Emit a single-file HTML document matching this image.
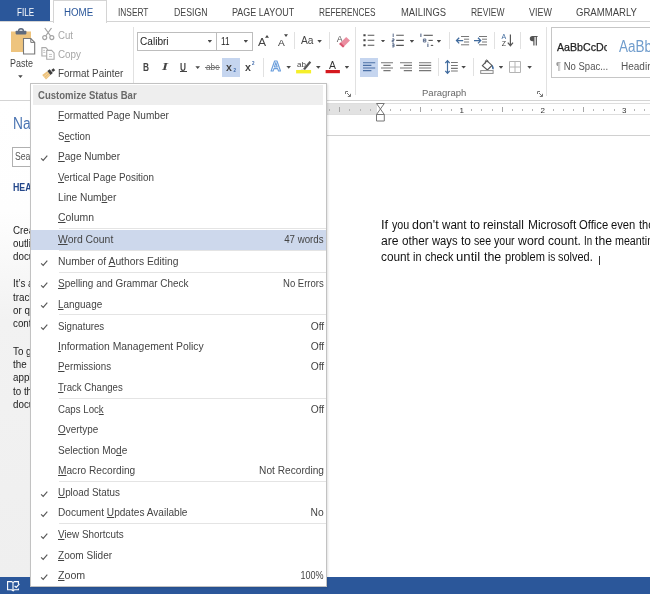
<!DOCTYPE html>
<html>
<head>
<meta charset="utf-8">
<title>Word - Customize Status Bar</title>
<style>
*{box-sizing:border-box;margin:0;padding:0}
html,body{width:650px;height:594px;overflow:hidden;background:#fff;font-family:"Liberation Sans",sans-serif;}
body{position:relative;color:#444;will-change:transform}
.abs{position:absolute}
svg{position:absolute;overflow:visible}
/* tabs */
#file{left:0;top:0;width:50px;height:21.5px;background:#2b579a}
.tab{top:6px;line-height:14px;font-size:10px;color:#444;white-space:nowrap;transform-origin:0 50%}
#home{left:53px;top:0;width:53.5px;height:22.5px;border:1px solid #d4d4d4;border-bottom:none;background:#fff;z-index:3}
#ribbon{left:0;top:21px;width:650px;height:80px;background:#fff;border-top:1px solid #d4d4d4;border-bottom:1px solid #d4d4d4}
.vsep{position:absolute;width:1px;background:#e1e1e1}
.t{position:absolute;white-space:nowrap;font-size:10px;color:#444;line-height:14px;transform-origin:0 50%}
.g{color:#a6a6a6}
.d{font-size:12px;line-height:15.65px;color:#111;white-space:pre}
.arr{position:absolute;width:4.6px;height:2.7px;background:#4a4a4a;clip-path:polygon(0 0,100% 0,50% 100%)}
/* nav pane */
#nav{left:0;top:101px;width:326px;height:476px;background:linear-gradient(to bottom,#ffffff 0,#fefefe 110px,#f2f2f2 220px,#efefef 100%)}
/* doc area */
#docbg{left:326px;top:101px;width:324px;height:476px;background:#fff}
/* status bar */
#status{left:0;top:577px;width:650px;height:17px;background:#2b579a}
/* menu */
#menu{left:30px;top:83px;width:296.5px;height:504px;background:#fff;border:1px solid #c2c2c2;z-index:10;box-shadow:1px 1px 2px rgba(0,0,0,.12)}
#mhead{left:2.1px;top:1.1px;width:290.4px;height:19.5px;background:#eeeeee}
#mhead span{position:absolute;left:5.3px;top:3.8px;font-weight:bold;font-size:10px;color:#696969;line-height:14px;white-space:nowrap;transform-origin:0 50%;display:block}
.mi{position:absolute;left:0;width:294.5px;height:20.33px;font-size:10px;line-height:20.33px;color:#444}
.mi .l{position:absolute;left:27.4px;top:0;white-space:nowrap;transform-origin:0 50%}
.mi .r{position:absolute;right:1.6px;top:0;white-space:nowrap;transform-origin:100% 50%}
.mi .c{position:absolute;left:8.9px;top:6.9px;width:8px;height:8px}
.mi u{text-decoration:underline;text-underline-offset:1px}
.msep{position:absolute;left:28px;width:266.5px;height:1px;background:#e4e4e4}
.hl{background:#cdd8ec}
</style>
</head>
<body>
<div id="file" class="abs"></div>
<div class="abs tab" style="transform:scaleX(0.8047);left:16.6px;color:#fff;z-index:4">FILE</div>
<div id="home" class="abs"></div>
<div class="abs tab" style="transform:scaleX(0.9733);left:64.4px;color:#2b579a;z-index:4">HOME</div>
<div class="abs tab" style="transform:scaleX(0.8329);left:118.4px">INSERT</div>
<div class="abs tab" style="transform:scaleX(0.8763);left:173.7px">DESIGN</div>
<div class="abs tab" style="transform:scaleX(0.9002);left:232.4px">PAGE LAYOUT</div>
<div class="abs tab" style="transform:scaleX(0.8251);left:319.3px">REFERENCES</div>
<div class="abs tab" style="transform:scaleX(0.9415);left:400.8px">MAILINGS</div>
<div class="abs tab" style="transform:scaleX(0.8466);left:471px">REVIEW</div>
<div class="abs tab" style="transform:scaleX(0.8919);left:529.3px">VIEW</div>
<div class="abs tab" style="transform:scaleX(0.9573);left:576.4px">GRAMMARLY</div>
<div id="ribbon" class="abs"></div>

<!-- CLIPBOARD GROUP -->
<svg style="left:10px;top:28px" width="27" height="28" viewBox="0 0 27 28">
  <rect x="1" y="3.5" width="20" height="20.5" fill="#eec47e"/>
  <rect x="5.6" y="2.8" width="10.8" height="3.6" rx="0.8" fill="#5f6b7e"/>
  <path d="M8.6 3 Q8.6 0.8 11 0.8 Q13.4 0.8 13.4 3" fill="none" stroke="#5f6b7e" stroke-width="1.4"/>
  <path d="M13.5 10.5 H20.8 L24.7 14.4 V26 H13.5 Z" fill="#fff" stroke="#777" stroke-width="1.1"/>
  <path d="M20.8 10.5 V14.4 H24.7" fill="none" stroke="#777" stroke-width="1"/>
</svg>
<div class="t" style="transform:scaleX(0.8953);left:10.1px;top:57.2px">Paste</div>
<div class="arr" style="left:18.1px;top:75.3px"></div>

<svg style="left:42px;top:28px" width="13" height="12" viewBox="0 0 13 12">
  <path d="M2.8 0 L8.6 8 M9.5 0 L3.7 8" stroke="#a3a3a3" stroke-width="1.25" fill="none"/>
  <circle cx="2.7" cy="9.6" r="2" fill="none" stroke="#a3a3a3" stroke-width="1.2"/>
  <circle cx="9.8" cy="9.6" r="2" fill="none" stroke="#a3a3a3" stroke-width="1.2"/>
</svg>
<div class="t g" style="transform:scaleX(0.9639);left:58px;top:28.9px">Cut</div>
<svg style="left:41px;top:47.2px" width="14" height="13" viewBox="0 0 14 13">
  <path d="M0.9 0.6 H4.8 L6.6 2.4 V9 H0.9 Z" fill="#fff" stroke="#ababab" stroke-width="1.1"/>
  <path d="M5.7 3.4 H10.6 L13.1 5.9 V12.2 H5.7 Z" fill="#fff" stroke="#ababab" stroke-width="1.1"/>
  <path d="M2.2 3.4H4 M2.2 5.4H4.4 M8 7.4H11 M8 9.6H11" stroke="#c4c4c4" stroke-width="1"/>
</svg>
<div class="t g" style="transform:scaleX(0.9846);left:58px;top:48.1px">Copy</div>
<svg style="left:42px;top:67.6px" width="14" height="12" viewBox="0 0 14 12">
  <path d="M0.2 7 L5.2 3.2 L8.4 7.2 L4 11.6 Z" fill="#edc27b"/>
  <path d="M2 8.6 L5.8 5.2 M3.4 10.2 L7.2 6.6" stroke="#f6dcae" stroke-width="0.8"/>
  <path d="M5.3 3.1 L7.7 1.3 L10.8 5.1 L8.5 7.1 Z" fill="#3d3d3d"/>
  <path d="M9.3 2 L11.5 0.2 L13.2 2.2 L10.9 4 Z" fill="#3d3d3d"/>
</svg>
<div class="t" style="transform:scaleX(0.9888);left:58px;top:67.1px">Format Painter</div>
<div class="vsep" style="left:133px;top:27px;height:68px"></div>

<!-- FONT GROUP -->
<div class="abs" style="left:137px;top:32px;width:80px;height:18.6px;border:1px solid #bdbdbd;background:#fff"></div>
<div class="abs" style="left:216px;top:32px;width:37px;height:18.6px;border:1px solid #bdbdbd;background:#fff"></div>
<div class="t" style="transform:scaleX(1.0090);left:140px;top:35px;color:#222">Calibri</div>
<div class="arr" style="left:207.5px;top:40px"></div>
<div class="t" style="transform:scaleX(0.8180);left:220.5px;top:35px;color:#222">11</div>
<div class="arr" style="left:243.5px;top:40px"></div>
<div class="t" style="transform:scaleX(1.0286);left:258.3px;top:34.7px;font-size:11.8px;color:#444">A</div>
<svg style="left:265.2px;top:34.6px" width="4" height="3" viewBox="0 0 4 3"><path d="M0 2.8L2 0L4 2.8Z" fill="#444"/></svg>
<div class="t" style="transform:scaleX(1.0387);left:278.1px;top:35.5px;font-size:9.8px;color:#333">A</div>
<svg style="left:284px;top:34.4px" width="4" height="3" viewBox="0 0 4 3"><path d="M0 0.2L2 3L4 0.2Z" fill="#444"/></svg>
<div class="vsep" style="left:294px;top:32px;height:17px"></div>
<div class="t" style="transform:scaleX(1.0217);left:300.5px;top:33.7px">Aa</div>
<div class="arr" style="left:317.3px;top:40px"></div>
<div class="vsep" style="left:329.2px;top:32px;height:17px"></div>
<svg style="left:336px;top:34px" width="15" height="14" viewBox="0 0 15 14">
  <text x="0.8" y="7.6" font-size="9" font-family="Liberation Sans" fill="#555">A</text>
  <path d="M3.2 10 L10.2 3 L14 6.6 L7 13.4 Z" fill="#ea8ea0"/>
  <path d="M3.2 10 L4.6 8.6 L8.4 12.2 L7 13.4 Z" fill="#d9546e"/>
</svg>

<div class="t" style="transform:scaleX(0.8294);left:143px;top:60.6px;font-size:10px;font-weight:bold;color:#444">B</div>
<div class="t" style="transform:scaleX(1.5360);left:161.8px;top:60px;font-size:10px;font-style:italic;font-weight:bold;font-family:'Liberation Serif',serif;color:#444">I</div>
<div class="t" style="transform:scaleX(0.8294);left:180.1px;top:60.6px;font-size:10px;font-weight:bold;color:#444">U</div>
<div class="abs" style="left:179.5px;top:71px;width:7.5px;height:1px;background:#444"></div>
<div class="arr" style="left:195.4px;top:66.3px"></div>
<div class="t" style="transform:scaleX(0.8677);left:205.9px;top:60px;font-size:9.5px;color:#666">abc</div>
<div class="abs" style="left:205.4px;top:67px;width:14.4px;height:1px;background:#777"></div>
<div class="abs" style="left:222px;top:58px;width:18px;height:19px;background:#c5d5ef"></div>
<div class="t" style="transform:scaleX(1.0096);left:226.4px;top:60px;font-size:10.5px;font-weight:bold;color:#444">x</div>
<div class="t" style="left:233.4px;top:63.5px;font-size:4.5px;color:#3a66a8;font-weight:bold">2</div>
<div class="t" style="transform:scaleX(1.0096);left:245.2px;top:60px;font-size:10.5px;font-weight:bold;color:#444">x</div>
<div class="t" style="left:252px;top:57.3px;font-size:4.5px;color:#3a66a8;font-weight:bold">2</div>
<div class="vsep" style="left:262.5px;top:58px;height:19px"></div>
<svg style="left:270px;top:60px" width="12" height="13" viewBox="0 0 12 13">
  <text x="0.8" y="11.4" font-size="14" font-weight="bold" font-family="Liberation Sans" fill="#fff" stroke="#6a9edc" stroke-width="1.1" stroke-linejoin="round">A</text>
</svg>
<div class="arr" style="left:286.4px;top:66px"></div>
<svg style="left:297px;top:59px" width="15" height="15" viewBox="0 0 15 15">
  <text x="0" y="7.5" font-size="8" font-family="Liberation Sans" fill="#444">ab</text>
  <path d="M6 10 L12.5 2 L14.2 3.4 L8 11 Z" fill="#555"/>
  <path d="M4.5 10.5 L7.6 11.4 L5 12.2 Z" fill="#555"/>
  <rect x="-0.9" y="11" width="15" height="3.4" fill="#f5ef2a"/>
</svg>
<div class="arr" style="left:316px;top:66px"></div>
<svg style="left:326px;top:59px" width="14" height="15" viewBox="0 0 14 15">
  <text x="3" y="10.3" font-size="10.4" font-family="Liberation Sans" fill="#333">A</text>
  <rect x="-0.4" y="11" width="14.3" height="3.2" fill="#d5181e"/>
</svg>
<div class="arr" style="left:344.6px;top:66px"></div>
<div class="vsep" style="left:355px;top:27px;height:68px"></div>
<svg style="left:345px;top:91px" width="6" height="6" viewBox="0 0 6 6"><path d="M0.5 3V0.5H3 M2 2L5.3 5.3 M5.5 2.8V5.5H2.8" fill="none" stroke="#777" stroke-width="1"/></svg>

<!-- PARAGRAPH GROUP row 1 -->
<svg style="left:363px;top:33px" width="12" height="14" viewBox="0 0 12 14">
  <path d="M0.4 2.2h2.2M0.4 7.3h2.2M0.4 12.3h2.2" stroke="#444" stroke-width="2"/>
  <path d="M4.7 2.2h6.6M4.7 7.3h6.6M4.7 12.3h6.6" stroke="#555" stroke-width="1.1"/>
</svg>
<div class="arr" style="left:380.7px;top:39.8px"></div>
<svg style="left:392px;top:33px" width="12" height="14" viewBox="0 0 12 14">
  <path d="M1.2 0.6v3.4M0.2 5.9h1.8v1.5h-1.8v1.5h1.8M0.2 10.8h1.8v3.1h-1.8M0.2 12.3h1.8" stroke="#44587c" stroke-width="0.9" fill="none"/>
  <path d="M4.2 2.3h7.6M4.2 7.4h7.6M4.2 12.4h7.6" stroke="#555" stroke-width="1.1"/>
</svg>
<div class="arr" style="left:409.6px;top:40px"></div>
<svg style="left:420px;top:33px" width="13" height="14" viewBox="0 0 13 14">
  <path d="M0.9 0.6v3.4" stroke="#44587c" stroke-width="1"/>
  <path d="M3.7 2.3h9.1" stroke="#555" stroke-width="1.1"/>
  <path d="M3.4 6h2.4v3h-2.4zM3.4 7.4h2.2" stroke="#44587c" stroke-width="0.8" fill="none"/>
  <path d="M8.5 7.4h4.3" stroke="#555" stroke-width="1.1"/>
  <path d="M7.9 11v3M7.9 9.6v0.8" stroke="#44587c" stroke-width="1"/>
  <path d="M10.8 12.4h2.4" stroke="#555" stroke-width="1.1"/>
</svg>
<div class="arr" style="left:436.6px;top:40px"></div>
<div class="vsep" style="left:449.2px;top:32px;height:17px"></div>
<svg style="left:455.7px;top:34px" width="13" height="12" viewBox="0 0 13 12">
  <path d="M5 2.5h8.1M8 5.2h5.1M8 8h5.1M5 10.8h8.1" stroke="#777" stroke-width="1"/>
  <path d="M0.6 6.6h6.6M3.2 3.8L0.5 6.6L3.2 9.4" stroke="#3f6a9d" stroke-width="1.3" fill="none"/>
</svg>
<svg style="left:474.2px;top:34px" width="13" height="12" viewBox="0 0 13 12">
  <path d="M5 2.5h8M8 5.2h5M8 8h5M5 10.8h8" stroke="#777" stroke-width="1"/>
  <path d="M0 6.6h6.6M4 3.8L6.7 6.6L4 9.4" stroke="#3f6a9d" stroke-width="1.3" fill="none"/>
</svg>
<div class="vsep" style="left:494px;top:32px;height:17px"></div>
<svg style="left:501px;top:33px" width="14" height="15" viewBox="0 0 14 15">
  <text x="0.5" y="6" font-size="7" font-family="Liberation Sans" fill="#3f6a9d">A</text>
  <text x="0.7" y="13.2" font-size="7" font-family="Liberation Sans" fill="#444">Z</text>
  <path d="M9.4 1.5v10.6M6.8 9.6L9.4 12.7L12 9.6" stroke="#555" stroke-width="1.2" fill="none"/>
</svg>
<div class="vsep" style="left:520.3px;top:32px;height:17px"></div>
<svg style="left:528.5px;top:36px" width="9" height="10" viewBox="0 0 9 10">
  <path d="M3.6 0 H8.6 V1.1 H7.9 V9.5 H6.7 V1.1 H5.5 V9.5 H4.3 V5.2 H3.4 A2.6 2.6 0 0 1 3.4 0 Z" fill="#555"/>
</svg>
<div class="vsep" style="left:546.3px;top:27px;height:69px"></div>

<!-- PARAGRAPH GROUP row 2 -->
<div class="abs" style="left:360px;top:58px;width:18px;height:19px;background:#c5d5ef"></div>
<svg style="left:363px;top:61px" width="13" height="12" viewBox="0 0 13 12"><path d="M0 1.8h12.2M0 4.4h8.4M0 7h12.2M0 9.6h8.4" stroke="#4a6fa5" stroke-width="1.1"/></svg>
<svg style="left:381.4px;top:61px" width="13" height="12" viewBox="0 0 13 12"><path d="M0 1.8h12M2.4 4.4h7.2M0 7h12M2.4 9.6h7.2" stroke="#777" stroke-width="1.1"/></svg>
<svg style="left:400.3px;top:61px" width="13" height="12" viewBox="0 0 13 12"><path d="M0 1.8h12M3.8 4.4h8.2M0 7h12M3.8 9.6h8.2" stroke="#777" stroke-width="1.1"/></svg>
<svg style="left:418.8px;top:61px" width="13" height="12" viewBox="0 0 13 12"><path d="M0 1.8h12.2M0 4.4h12.2M0 7h12.2M0 9.6h12.2" stroke="#777" stroke-width="1.1"/></svg>
<div class="vsep" style="left:438px;top:58px;height:18px"></div>
<svg style="left:444.5px;top:60px" width="13" height="14" viewBox="0 0 13 14">
  <path d="M2.5 1v12M0.3 3.2L2.5 0.6L4.7 3.2M0.3 10.8L2.5 13.4L4.7 10.8" stroke="#3f6a9d" stroke-width="1.2" fill="none"/>
  <path d="M6 2.5h6.8M6 5.5h6.8M6 8.4h6.8M6 11h6.8" stroke="#777" stroke-width="1.1"/>
</svg>
<div class="arr" style="left:461.3px;top:65.9px"></div>
<div class="vsep" style="left:473px;top:58px;height:18px"></div>
<svg style="left:480px;top:59px" width="15" height="15" viewBox="0 0 15 15">
  <path d="M2.4 6.6L7 1.8L12 6.4L7.4 11Z" fill="#fff" stroke="#555" stroke-width="1.1"/>
  <path d="M5.4 4.6V1.8Q6.4 0.2 7.8 1.6V3.2" fill="none" stroke="#555" stroke-width="0.9"/>
  <path d="M12.2 5.8Q14.6 8.8 13.4 10.4Q11.4 10.8 12.2 5.8Z" fill="#3f6a9d"/>
  <rect x="0.7" y="11.6" width="12.4" height="2.8" fill="#fff" stroke="#8a8a8a" stroke-width="1"/>
</svg>
<div class="arr" style="left:498.7px;top:66px"></div>
<svg style="left:509.1px;top:61.2px" width="12" height="12" viewBox="0 0 12 12">
  <path d="M0.5 0.5h11v11h-11zM6 0.5v11M0.5 6h11" fill="none" stroke="#b4b4b4" stroke-width="1"/>
</svg>
<div class="arr" style="left:527.3px;top:66px"></div>
<div class="t" style="transform:scaleX(1.0006);left:421.7px;top:86.2px;font-size:9.5px;color:#666">Paragraph</div>
<svg style="left:536.5px;top:91px" width="6" height="6" viewBox="0 0 6 6"><path d="M0.5 3V0.5H3 M2 2L5.3 5.3 M5.5 2.8V5.5H2.8" fill="none" stroke="#777" stroke-width="1"/></svg>

<!-- STYLES -->
<div class="abs" style="left:551px;top:27.3px;width:110px;height:50.5px;border:1px solid #c6c6c6;background:#fff"></div>
<div class="abs" style="left:557.4px;top:39.7px;width:49.6px;height:14px;overflow:hidden"><div class="t" style="transform:scaleX(0.9666);left:0;top:0;font-size:11px;color:#222;-webkit-text-stroke:0.25px #222">AaBbCcDc</div></div>
<div class="t" style="transform:scaleX(0.8431);left:618.7px;top:37.3px;font-size:16px;line-height:20px;color:#6f9ccc">AaBb</div>
<div class="t" style="transform:scaleX(0.9500);left:556.4px;top:59.5px;color:#555"><span style="color:#999">&para;</span> No Spac...</div>
<div class="t" style="left:621px;top:59.5px;color:#555">Heading</div>

<!-- NAV PANE -->
<div id="nav" class="abs"></div>
<div class="t" style="transform:scaleX(0.8597);left:12.9px;top:113.6px;font-size:16px;line-height:20px;color:#4a74b2">Navigation</div>
<div class="abs" style="left:12px;top:146.8px;width:200px;height:20px;border:1px solid #b0b0b0;background:#fff"></div>
<div class="t" style="transform:scaleX(0.8675);left:14.9px;top:149.8px;color:#555">Search document</div>
<div class="t" style="transform:scaleX(0.8807);left:13.3px;top:181.2px;font-size:10px;font-weight:bold;color:#24478a">HEADINGS</div>
<div class="t" style="transform:scaleX(0.98);left:12.5px;top:223.5px;line-height:13.3px;color:#222;white-space:pre">Create an interactive
outline of your
document.</div>
<div class="t" style="transform:scaleX(0.98);left:12.5px;top:277.2px;line-height:13.4px;color:#222;white-space:pre">It&#8217;s a great way to keep
track of where you are
or quickly move your
content around.</div>
<div class="t" style="transform:scaleX(0.98);left:12.5px;top:344.7px;line-height:13.3px;color:#222;white-space:pre">To get started, go to
the Home tab and
apply Heading styles
to the headings in your
document.</div>

<!-- DOC AREA -->
<div id="docbg" class="abs"></div>
<div class="abs" style="left:326px;top:103.5px;width:51px;height:10.5px;background:#e2e2e2"></div>
<div class="abs" style="left:326px;top:103px;width:324px;height:1px;background:#dedede"></div>
<div class="abs" style="left:326px;top:114px;width:324px;height:1px;background:#dedede"></div>
<div class="abs" style="left:326px;top:135px;width:324px;height:1px;background:#d0d0d0"></div>
<svg style="left:375.9px;top:102.5px" width="9" height="19" viewBox="0 0 9 19">
  <path d="M0.5 0.5H8.3L4.4 6L8.3 11.5V18H0.5V11.5L4.4 6Z M0.5 11.5H8.3" fill="#fff" stroke="#777" stroke-width="1"/>
</svg>
<div class="abs" style="left:329.0px;top:108.7px;width:1px;height:2px;background:#b4b4b4"></div>
<div class="abs" style="left:339.2px;top:107px;width:1px;height:5px;background:#a5a5a5"></div>
<div class="abs" style="left:349.3px;top:108.7px;width:1px;height:2px;background:#b4b4b4"></div>
<div class="abs" style="left:359.5px;top:108.7px;width:1px;height:2px;background:#b4b4b4"></div>
<div class="abs" style="left:369.6px;top:108.7px;width:1px;height:2px;background:#b4b4b4"></div>
<div class="abs" style="left:390.0px;top:108.7px;width:1px;height:2px;background:#b4b4b4"></div>
<div class="abs" style="left:400.1px;top:108.7px;width:1px;height:2px;background:#b4b4b4"></div>
<div class="abs" style="left:410.3px;top:108.7px;width:1px;height:2px;background:#b4b4b4"></div>
<div class="abs" style="left:420.4px;top:107px;width:1px;height:5px;background:#a5a5a5"></div>
<div class="abs" style="left:430.6px;top:108.7px;width:1px;height:2px;background:#b4b4b4"></div>
<div class="abs" style="left:440.8px;top:108.7px;width:1px;height:2px;background:#b4b4b4"></div>
<div class="abs" style="left:450.9px;top:108.7px;width:1px;height:2px;background:#b4b4b4"></div>
<div class="abs" style="left:471.3px;top:108.7px;width:1px;height:2px;background:#b4b4b4"></div>
<div class="abs" style="left:481.4px;top:108.7px;width:1px;height:2px;background:#b4b4b4"></div>
<div class="abs" style="left:491.6px;top:108.7px;width:1px;height:2px;background:#b4b4b4"></div>
<div class="abs" style="left:501.8px;top:107px;width:1px;height:5px;background:#a5a5a5"></div>
<div class="abs" style="left:511.9px;top:108.7px;width:1px;height:2px;background:#b4b4b4"></div>
<div class="abs" style="left:522.1px;top:108.7px;width:1px;height:2px;background:#b4b4b4"></div>
<div class="abs" style="left:532.2px;top:108.7px;width:1px;height:2px;background:#b4b4b4"></div>
<div class="abs" style="left:552.6px;top:108.7px;width:1px;height:2px;background:#b4b4b4"></div>
<div class="abs" style="left:562.7px;top:108.7px;width:1px;height:2px;background:#b4b4b4"></div>
<div class="abs" style="left:572.9px;top:108.7px;width:1px;height:2px;background:#b4b4b4"></div>
<div class="abs" style="left:583.0px;top:107px;width:1px;height:5px;background:#a5a5a5"></div>
<div class="abs" style="left:593.2px;top:108.7px;width:1px;height:2px;background:#b4b4b4"></div>
<div class="abs" style="left:603.4px;top:108.7px;width:1px;height:2px;background:#b4b4b4"></div>
<div class="abs" style="left:613.5px;top:108.7px;width:1px;height:2px;background:#b4b4b4"></div>
<div class="abs" style="left:633.9px;top:108.7px;width:1px;height:2px;background:#b4b4b4"></div>
<div class="abs" style="left:644.0px;top:108.7px;width:1px;height:2px;background:#b4b4b4"></div>
<div class="t" style="left:459.4px;top:103.6px;font-size:8px;color:#333">1</div>
<div class="t" style="left:540.5px;top:103.6px;font-size:8px;color:#333">2</div>
<div class="t" style="left:622px;top:103.6px;font-size:8px;color:#333">3</div>
<div class="t d" style="transform:scaleX(1.0683);left:381.0px;top:218.2px">If </div>
<div class="t d" style="transform:scaleX(0.8904);left:391.7px;top:218.2px">you </div>
<div class="t d" style="transform:scaleX(1.0385);left:411.9px;top:218.2px">don't </div>
<div class="t d" style="transform:scaleX(0.9691);left:442px;top:218.2px">want </div>
<div class="t d" style="transform:scaleX(1.0117);left:469.8px;top:218.2px">to </div>
<div class="t d" style="transform:scaleX(0.9891);left:483.3px;top:218.2px">reinstall </div>
<div class="t d" style="transform:scaleX(0.9901);left:527.5px;top:218.2px">Microsoft </div>
<div class="t d" style="transform:scaleX(0.9371);left:579px;top:218.2px">Office </div>
<div class="t d" style="transform:scaleX(0.9333);left:611.3px;top:218.2px">even </div>
<div class="t d" style="transform:scaleX(0.9169);left:638.7px;top:218.2px">tho</div>
<div class="t d" style="transform:scaleX(1.0151);left:381.0px;top:233.85px">are </div>
<div class="t d" style="transform:scaleX(0.9776);left:402px;top:233.85px">other </div>
<div class="t d" style="transform:scaleX(0.9352);left:432px;top:233.85px">ways </div>
<div class="t d" style="transform:scaleX(0.9967);left:460.7px;top:233.85px">to </div>
<div class="t d" style="transform:scaleX(0.8815);left:474px;top:233.85px">see </div>
<div class="t d" style="transform:scaleX(0.8843);left:494px;top:233.85px">your </div>
<div class="t d" style="transform:scaleX(1.0258);left:517.6px;top:233.85px">word </div>
<div class="t d" style="transform:scaleX(1.0047);left:547.7px;top:233.85px">count. </div>
<div class="t d" style="transform:scaleX(0.8094);left:583.9px;top:233.85px">In </div>
<div class="t d" style="transform:scaleX(1.0142);left:594.7px;top:233.85px">the </div>
<div class="t d" style="transform:scaleX(0.8921);left:615px;top:233.85px">meantime</div>
<div class="t d" style="transform:scaleX(0.9846);left:381.0px;top:249.5px">count </div>
<div class="t d" style="transform:scaleX(0.9064);left:413.2px;top:249.5px">in </div>
<div class="t d" style="transform:scaleX(0.9081);left:424.7px;top:249.5px">check </div>
<div class="t d" style="transform:scaleX(1.0962);left:456.2px;top:249.5px">until </div>
<div class="t d" style="transform:scaleX(1.0342);left:484px;top:249.5px">the </div>
<div class="t d" style="transform:scaleX(0.9210);left:504.7px;top:249.5px">problem </div>
<div class="t d" style="transform:scaleX(0.8417);left:547.7px;top:249.5px">is </div>
<div class="t d" style="transform:scaleX(0.9124);left:557.8px;top:249.5px">solved.</div>
<div class="abs" style="left:598.6px;top:256px;width:1px;height:9px;background:#333"></div>

<!-- STATUS BAR -->
<div id="status" class="abs"></div>
<svg style="left:7px;top:581px;z-index:2" width="13" height="11" viewBox="0 0 13 11">
  <path d="M0.6 0.6H4.5L6 1.6V9.8L4.5 8.8H0.6Z M6 1.6L7.5 0.6H11.4V3 M6 9.8L7.5 8.8H11.4V7.5" fill="none" stroke="#fff" stroke-width="1.1"/>
  <path d="M7.6 4.8L9.2 6.4L12.4 2.8" fill="none" stroke="#fff" stroke-width="1.2"/>
</svg>

<!-- MENU -->
<div id="menu" class="abs">
  <div id="mhead" class="abs"><span style="transform:scaleX(0.9540);">Customize Status Bar</span></div>
<div class="mi" style="top:22.30px"><span class="l" style="transform:scaleX(1.0076);"><u>F</u>ormatted Page Number</span></div>
<div class="mi" style="top:42.72px"><span class="l" style="transform:scaleX(0.9682);">S<u>e</u>ction</span></div>
<div class="mi" style="top:63.14px"><svg class="c" viewBox="0 0 8 8"><path d="M1.1 4.3 L3.2 6.4 L7.3 1.6" fill="none" stroke="#585858" stroke-width="1.15"/></svg><span class="l" style="transform:scaleX(1.0048);"><u>P</u>age Number</span></div>
<div class="mi" style="top:83.56px"><span class="l" style="transform:scaleX(0.9867);"><u>V</u>ertical Page Position</span></div>
<div class="mi" style="top:103.98px"><span class="l" style="transform:scaleX(1.0178);">Line Num<u>b</u>er</span></div>
<div class="mi" style="top:124.40px"><span class="l" style="transform:scaleX(1.0440);"><u>C</u>olumn</span></div>
<div class="msep" style="top:144.27px"></div>
<div class="hl" style="position:absolute;left:0;width:294.5px;top:145.72px;height:20.3px"></div>
<div class="mi" style="top:146.32px"><span class="l" style="transform:scaleX(1.0397);"><u>W</u>ord Count</span><span class="r" style="transform:scaleX(0.9710);">47 words</span></div>
<div class="msep" style="top:166.19px"></div>
<div class="mi" style="top:168.24px"><svg class="c" viewBox="0 0 8 8"><path d="M1.1 4.3 L3.2 6.4 L7.3 1.6" fill="none" stroke="#585858" stroke-width="1.15"/></svg><span class="l" style="transform:scaleX(1.0321);">Number of <u>A</u>uthors Editing</span></div>
<div class="msep" style="top:188.11px"></div>
<div class="mi" style="top:190.16px"><svg class="c" viewBox="0 0 8 8"><path d="M1.1 4.3 L3.2 6.4 L7.3 1.6" fill="none" stroke="#585858" stroke-width="1.15"/></svg><span class="l" style="transform:scaleX(0.9949);"><u>S</u>pelling and Grammar Check</span><span class="r" style="transform:scaleX(0.9533);">No Errors</span></div>
<div class="mi" style="top:210.58px"><svg class="c" viewBox="0 0 8 8"><path d="M1.1 4.3 L3.2 6.4 L7.3 1.6" fill="none" stroke="#585858" stroke-width="1.15"/></svg><span class="l" style="transform:scaleX(0.9933);"><u>L</u>anguage</span></div>
<div class="msep" style="top:230.45px"></div>
<div class="mi" style="top:232.50px"><svg class="c" viewBox="0 0 8 8"><path d="M1.1 4.3 L3.2 6.4 L7.3 1.6" fill="none" stroke="#585858" stroke-width="1.15"/></svg><span class="l" style="transform:scaleX(0.9660);">Si<u>g</u>natures</span><span class="r" style="transform:scaleX(1.0261);">Off</span></div>
<div class="mi" style="top:252.92px"><span class="l" style="transform:scaleX(1.0360);"><u>I</u>nformation Management Policy</span><span class="r" style="transform:scaleX(1.0261);">Off</span></div>
<div class="mi" style="top:273.34px"><span class="l" style="transform:scaleX(0.9749);"><u>P</u>ermissions</span><span class="r" style="transform:scaleX(1.0261);">Off</span></div>
<div class="mi" style="top:293.76px"><span class="l" style="transform:scaleX(0.9592);"><u>T</u>rack Changes</span></div>
<div class="msep" style="top:313.63px"></div>
<div class="mi" style="top:315.68px"><span class="l" style="transform:scaleX(0.9672);">Caps Loc<u>k</u></span><span class="r" style="transform:scaleX(1.0261);">Off</span></div>
<div class="mi" style="top:336.10px"><span class="l" style="transform:scaleX(0.9907);"><u>O</u>vertype</span></div>
<div class="mi" style="top:356.52px"><span class="l" style="transform:scaleX(1.0053);">Selection Mo<u>d</u>e</span></div>
<div class="mi" style="top:376.94px"><span class="l" style="transform:scaleX(1.0137);"><u>M</u>acro Recording</span><span class="r" style="transform:scaleX(1.0137);">Not Recording</span></div>
<div class="msep" style="top:396.81px"></div>
<div class="mi" style="top:398.86px"><svg class="c" viewBox="0 0 8 8"><path d="M1.1 4.3 L3.2 6.4 L7.3 1.6" fill="none" stroke="#585858" stroke-width="1.15"/></svg><span class="l" style="transform:scaleX(0.9850);"><u>U</u>pload Status</span></div>
<div class="mi" style="top:419.28px"><svg class="c" viewBox="0 0 8 8"><path d="M1.1 4.3 L3.2 6.4 L7.3 1.6" fill="none" stroke="#585858" stroke-width="1.15"/></svg><span class="l" style="transform:scaleX(1.0097);">Document <u>U</u>pdates Available</span><span class="r" style="transform:scaleX(1.0315);">No</span></div>
<div class="msep" style="top:439.15px"></div>
<div class="mi" style="top:441.20px"><svg class="c" viewBox="0 0 8 8"><path d="M1.1 4.3 L3.2 6.4 L7.3 1.6" fill="none" stroke="#585858" stroke-width="1.15"/></svg><span class="l" style="transform:scaleX(0.9860);"><u>V</u>iew Shortcuts</span></div>
<div class="mi" style="top:461.62px"><svg class="c" viewBox="0 0 8 8"><path d="M1.1 4.3 L3.2 6.4 L7.3 1.6" fill="none" stroke="#585858" stroke-width="1.15"/></svg><span class="l" style="transform:scaleX(1.0033);"><u>Z</u>oom Slider</span></div>
<div class="mi" style="top:482.04px"><svg class="c" viewBox="0 0 8 8"><path d="M1.1 4.3 L3.2 6.4 L7.3 1.6" fill="none" stroke="#585858" stroke-width="1.15"/></svg><span class="l" style="transform:scaleX(1.0641);"><u>Z</u>oom</span><span class="r" style="transform:scaleX(0.9031);">100%</span></div>
</div>
</body>
</html>
